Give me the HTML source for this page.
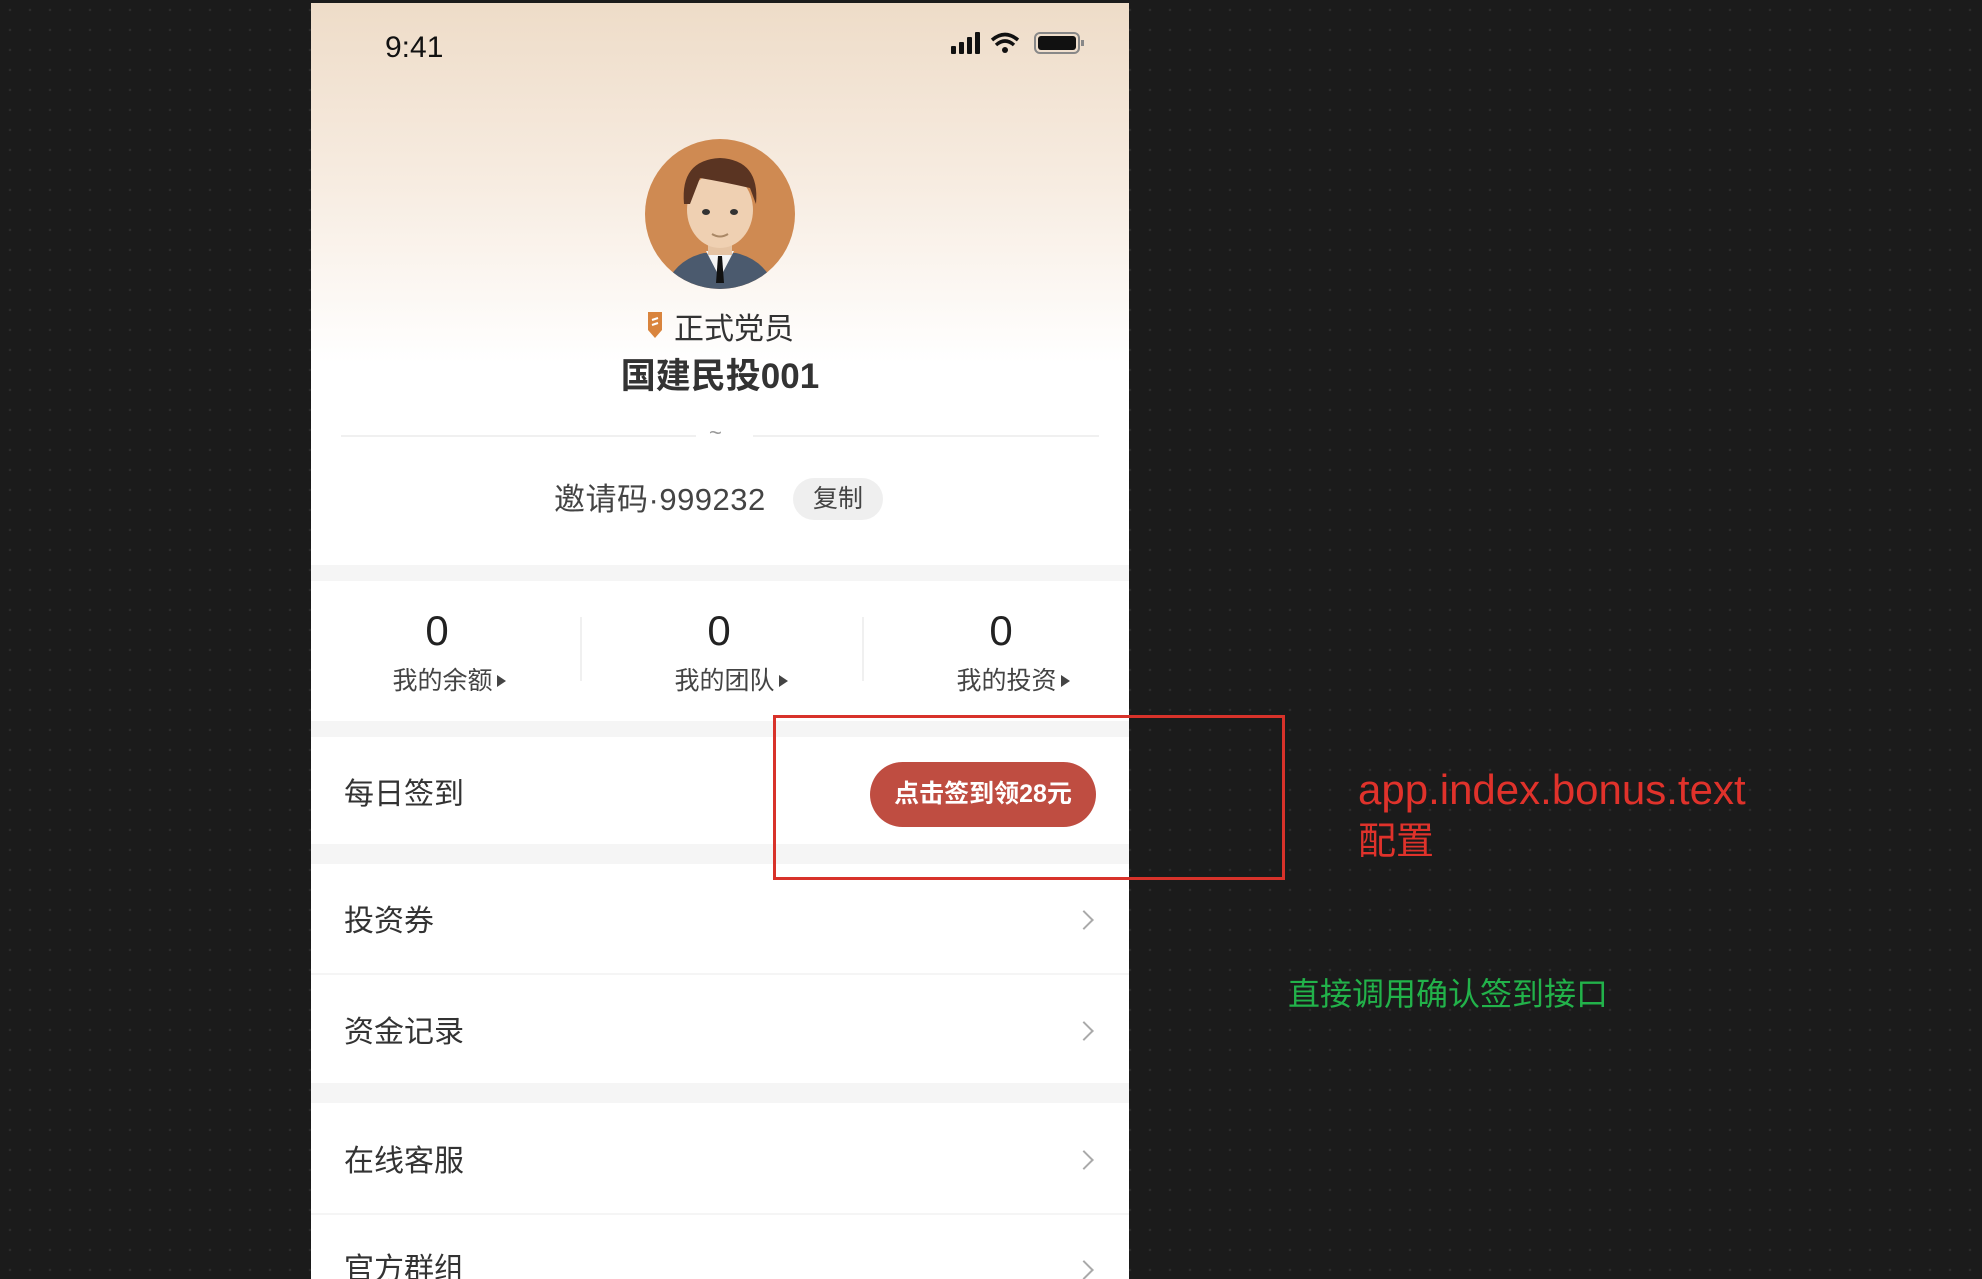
<!DOCTYPE html>
<html><head><meta charset="utf-8"><style>
*{margin:0;padding:0;box-sizing:border-box}
body{width:1982px;height:1279px;background:#1b1b1b;overflow:hidden;position:relative;font-family:"Liberation Sans","Noto Sans CJK SC",sans-serif;
background-image:radial-gradient(circle,#2c2c2c 1px,transparent 1.5px);background-size:20px 20px}
.a{position:absolute}
#ph{left:311px;top:3px;width:818px;height:1276px;background:#fff;overflow:hidden}
.t{position:absolute;white-space:nowrap}
.gray{position:absolute;left:0;width:818px;background:#f5f5f5}
.row{position:absolute;left:33px;font-size:30px;color:#333}
.chev{position:absolute;right:38px;width:14px;height:14px;border-top:2px solid #aaa;border-right:2px solid #aaa;transform:rotate(45deg)}
.num{position:absolute;font-size:42px;color:#222;width:282px;text-align:center}
.lab{position:absolute;font-size:25px;color:#444;width:282px;text-align:center}
.tri{display:inline-block;width:0;height:0;border-left:9px solid #444;border-top:6px solid transparent;border-bottom:6px solid transparent;margin-left:4px;vertical-align:2px}
</style></head><body>
<div id="ph" class="a">
 <div class="a" style="left:0;top:0;width:818px;height:360px;background:linear-gradient(#eedcc8,#f7ece1 50%,#fff)"></div>
 <div class="t" style="left:74px;top:28px;font-size:30px;color:#111">9:41</div>
 <svg class="a" style="left:640px;top:28px" width="160" height="30">
  <rect x="0" y="15" width="5" height="8" rx="1" fill="#111"/><rect x="8" y="11" width="5" height="12" rx="1" fill="#111"/><rect x="16" y="6" width="5" height="17" rx="1" fill="#111"/><rect x="24" y="1" width="5" height="22" rx="1" fill="#111"/>
  <path d="M41 9 Q54 -2 67 9" stroke="#111" stroke-width="3.5" fill="none"/><path d="M45 14 Q54 6 63 14" stroke="#111" stroke-width="3.5" fill="none"/><circle cx="54" cy="19" r="3" fill="#111"/>
  <rect x="84" y="2" width="44" height="20" rx="5" fill="none" stroke="#888" stroke-width="2"/><rect x="87" y="5" width="38" height="14" rx="3" fill="#111"/><rect x="130" y="9" width="3" height="6" fill="#888"/>
 </svg>
 <svg class="a" style="left:333px;top:135px" width="152" height="152" viewBox="0 0 152 152">
  <defs><clipPath id="c"><ellipse cx="76" cy="76" rx="75" ry="75"/></clipPath></defs>
  <g clip-path="url(#c)">
   <rect width="152" height="152" fill="#cf8a52"/>
   <path d="M20 152 Q30 122 60 115 L92 115 Q122 122 132 152Z" fill="#4b5a6e"/>
   <path d="M62 113 L76 140 L90 113Z" fill="#f4f4f4"/><path d="M74 118 L78 118 L80 145 L72 145Z" fill="#111"/>
   <rect x="64" y="95" width="24" height="22" fill="#e5c3a3"/>
   <ellipse cx="76" cy="72" rx="33" ry="38" fill="#efd0b2"/>
   <path d="M40 66 Q36 22 76 20 Q116 22 112 66 L106 50 Q80 44 56 40 L46 66Z" fill="#5a3422"/>
   <ellipse cx="62" cy="74" rx="4" ry="3" fill="#333"/><ellipse cx="90" cy="74" rx="4" ry="3" fill="#333"/>
   <path d="M68 96 Q76 101 84 96" stroke="#a86" stroke-width="2" fill="none"/>
  </g>
 </svg>
 <svg class="a" style="left:334px;top:307px" width="20" height="30"><path d="M3 2 L17 2 L17 20 L10 28 L3 20Z" fill="#d9843d"/><path d="M7 10 L13 8 M7 15 L13 13" stroke="#fff" stroke-width="2"/></svg>
 <div class="t" style="left:363px;top:301px;font-size:30px;color:#333">正式党员</div>
 <div class="t" style="left:0;width:818px;text-align:center;top:345px;font-size:35px;font-weight:bold;color:#333">国建民投001</div>
 <div class="a" style="left:30px;top:432px;width:355px;height:2px;background:#f0f0f0"></div>
 <div class="a" style="left:442px;top:432px;width:346px;height:2px;background:#f0f0f0"></div>
 <div class="t" style="left:398px;top:417px;font-size:22px;color:#999">~</div>
 <div class="t" style="left:243px;top:471px;font-size:31px;color:#444;letter-spacing:0.5px">邀请码·999232</div>
 <div class="a" style="left:482px;top:475px;width:90px;height:42px;border-radius:21px;background:#efefef;font-size:25px;color:#444;text-align:center;line-height:42px">复制</div>
 <div class="gray" style="top:562px;height:16px"></div>
 <div class="num" style="left:-15px;top:604px">0</div><div class="lab" style="left:-3px;top:658px">我的余额<span class="tri"></span></div>
 <div class="num" style="left:267px;top:604px">0</div><div class="lab" style="left:279px;top:658px">我的团队<span class="tri"></span></div>
 <div class="num" style="left:549px;top:604px">0</div><div class="lab" style="left:561px;top:658px">我的投资<span class="tri"></span></div>
 <div class="a" style="left:269px;top:614px;width:2px;height:64px;background:#f0f0f0"></div>
 <div class="a" style="left:551px;top:614px;width:2px;height:64px;background:#f0f0f0"></div>
 <div class="gray" style="top:718px;height:16px"></div>
 <div class="row" style="top:766px">每日签到</div>
 <div class="a" style="left:559px;top:759px;width:226px;height:65px;border-radius:33px;background:#bf4d41;color:#fff;font-size:25px;font-weight:bold;text-align:center;line-height:65px">点击签到领28元</div>
 <div class="gray" style="top:841px;height:20px"></div>
 <div class="row" style="top:893px">投资券</div><div class="chev" style="top:910px"></div>
 <div class="a" style="left:0;top:970px;width:818px;height:2px;background:#f5f5f5"></div>
 <div class="row" style="top:1004px">资金记录</div><div class="chev" style="top:1021px"></div>
 <div class="gray" style="top:1080px;height:20px"></div>
 <div class="row" style="top:1133px">在线客服</div><div class="chev" style="top:1150px"></div>
 <div class="a" style="left:0;top:1210px;width:818px;height:2px;background:#f5f5f5"></div>
 <div class="row" style="top:1241px">官方群组</div><div class="chev" style="top:1260px"></div>
</div>
<div class="a" style="left:773px;top:715px;width:512px;height:165px;border:3px solid #d8322a"></div>
<div class="t" style="left:1358px;top:766px;font-size:42px;color:#e0322b">app.index.bonus.text</div>
<div class="t" style="left:1358px;top:810px;font-size:38px;color:#e0322b">配置</div>
<div class="t" style="left:1288px;top:969px;font-size:32px;color:#22b24a">直接调用确认签到接口</div>
</body></html>
